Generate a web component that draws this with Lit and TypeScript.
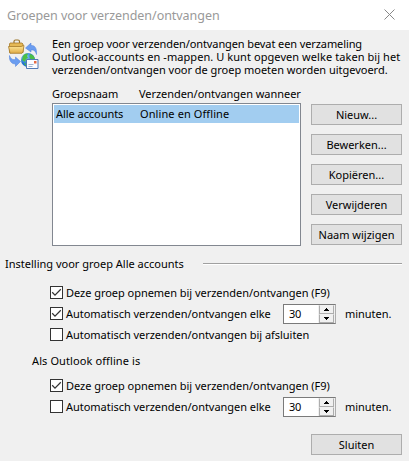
import { LitElement, html, css, svg, nothing } from "lit";
import { customElement, property } from "lit/decorators.js";

@customElement("push-button")
class PushButton extends LitElement {
  @property() label = "";
  static styles = css`
    :host { display: block; width: 91px; height: 21px; letter-spacing: 0; }
    button { width: 100%; height: 100%; box-sizing: border-box; border: 1px solid #adadad; background: #e1e1e1;
      padding: 1px 0 0; margin: 0; font: inherit; letter-spacing: inherit; color: #000; line-height: 18px; display: block; white-space: nowrap; }
  `;
  render() { return html`<button>${this.label}</button>`; }
}

@customElement("check-row")
class CheckRow extends LitElement {
  @property({ type: Boolean }) checked = false;
  @property() label = "";
  static styles = css`
    :host { display: flex; height: 13px; align-items: flex-start; }
    .box { width: 13px; height: 13px; box-sizing: border-box; border: 1px solid #333; background: #fff; margin-right: 3px; flex: none; }
    svg { display: block; }
    .label { line-height: 13px; white-space: nowrap; }
  `;
  render() {
    return html`<span class="box">${this.checked
      ? html`<svg width="11" height="11" viewBox="0 0 11 11">${svg`<path d="M1.2 5.3 4 8.1 9.8 2.3" fill="none" stroke="#333" stroke-width="1.25"/>`}</svg>`
      : nothing}</span><span class="label">${this.label}</span>`;
  }
}

@customElement("number-spinner")
class NumberSpinner extends LitElement {
  @property({ type: Number }) value = 0;
  static styles = css`
    :host { display: flex; box-sizing: border-box; width: 53px; height: 20px; background: #fff;
      border: 1px solid #7a7a7a; border-right-color: #adadad; }
    .value { flex: 1; padding-left: 5px; line-height: 17px; letter-spacing: -0.3px; }
    .arrows { width: 17px; box-sizing: border-box; display: flex; flex-direction: column; background: #f0f0f0; padding: 0 1px; height: 18px; }
    .arrow { box-sizing: border-box; height: 9px; border: 1px solid #adadad; border-top-color: #f0f0f0; background: #f0f0f0; display: flex; align-items: center; justify-content: center; }
    svg { display: block; }
  `;
  render() {
    return html`<span class="value">${this.value}</span>
      <span class="arrows">
        <span class="arrow"><svg width="5" height="3" shape-rendering="crispEdges"><path d="M2 0h1v1h1v1h1v1H0V2h1V1h1z"/></svg></span>
        <span class="arrow"><svg width="5" height="3" shape-rendering="crispEdges"><path d="M0 0h5v1H4v1H3v1H2V2H1V1H0z"/></svg></span>
      </span>`;
  }
}

@customElement("app-root")
class AppRoot extends LitElement {
  static styles = css`
    :host { display: block; width: 409px; height: 461px; background: #f0f0f0; color: #000; overflow: hidden;
      font: 11px/13px "Noto Sans", "Open Sans", sans-serif; letter-spacing: 0; }
    .titlebar { height: 30px; box-sizing: border-box; background: #fff; display: flex; justify-content: space-between; padding: 0 14px 0 7px; }
    .title { font-size: 12.5px; line-height: 32px; color: #999; letter-spacing: -0.04px; white-space: nowrap; }
    .close { margin-top: 9px; }
    .intro { display: flex; padding: 7px 0 0 8px; height: 50px; box-sizing: border-box; }
    .sync { flex: none; margin: 2px 11px 0 0; }
    .intro p { margin: 0; white-space: nowrap; }
    .intro p span { display: block; }
    .l1 { letter-spacing: -0.1px; }
    .l2 { letter-spacing: 0.07px; }
    .l3 { letter-spacing: -0.02px; }
    .headers { display: flex; margin: 7px 0 3px 52px; height: 13px; letter-spacing: -0.05px; }
    .headers span, .item span { white-space: nowrap; }
    .c1 { width: 87px; flex: none; }
    .item .name { width: 84px; letter-spacing: -0.05px; }
    .groups { display: flex; justify-content: space-between; padding: 0 7px 0 52px; }
    .list { width: 249px; height: 143px; box-sizing: border-box; border: 1px solid #828790; background: #fff; padding: 1px; }
    .item { display: flex; height: 18px; line-height: 18px; background: #a2cdf0; padding-left: 2px; letter-spacing: 0.1px; }
    .buttons { display: flex; flex-direction: column; gap: 9px; padding-top: 1px; }
    .section { display: flex; align-items: flex-start; margin: 11px 7px 0 5px; height: 13px; white-space: nowrap; }
    .rule { width: 199px; height: 1px; background: #a0a0a0; border-bottom: 1px solid #fff; margin: 6px 0 0 auto; }
    .options { display: flex; flex-direction: column; gap: 8px; margin-left: 50px; letter-spacing: -0.035px; }
    .online { margin-top: 16px; }
    .offline { margin-top: 12px; }
    .timed { display: flex; height: 13px; align-items: center; }
    .timed check-row { width: 233px; }
    .timed number-spinner { flex: none; margin: 0 9px 0 0; }
    .subhead { margin: 13px 0 0 32px; height: 13px; letter-spacing: 0.1px; }
    .footer { display: flex; justify-content: flex-end; padding: 21px 7px 0 0; }
  `;

  private timed(checked: boolean) {
    return html`<div class="timed">
      <check-row ?checked=${checked} label="Automatisch verzenden/ontvangen elke"></check-row>
      <number-spinner .value=${30}></number-spinner><span>minuten.</span>
    </div>`;
  }

  render() {
    return html`
      <div class="titlebar">
        <span class="title">Groepen voor verzenden/ontvangen</span>
        <svg class="close" width="11" height="11" viewBox="0 0 11 11"><path d="M.5.5l10 10M10.500.5l-10 10" stroke="#888" fill="none"/></svg>
      </div>
      <div class="intro">
        <svg class="sync" width="33" height="32" viewBox="0 0 33 32">
          <defs>
            <linearGradient id="gold" x2="0" y2="1"><stop stop-color="#ffe99b"/><stop offset="1" stop-color="#e0ab45"/></linearGradient>
            <radialGradient id="globe" cx=".35" cy=".3"><stop stop-color="#8fd0ff"/><stop offset="1" stop-color="#1c6fd0"/></radialGradient>
          </defs>
          <path d="M6 4.500V2.500Q6 1 7.500 1h2.500Q11.500 1 11.500 2.500V4.500" fill="none" stroke="#9a7428" stroke-width="1.200"/>
          <path d="M2 4h12l1 1v8.500H1.500V5z" fill="#e6b955" stroke="#a67a2a" stroke-width=".8"/>
          <path d="M.5 7.500h12.500l3-1-1 6.500-1 1.300H2z" fill="url(#gold)" stroke="#a67a2a" stroke-width=".8"/>
          <path d="M17.500 9l5.500-5v2.500c4-.5 6 3 5.500 9-1-3.500-2.500-5-5.500-4.500V13z" fill="#6b9df0" stroke="#4a7ddb" stroke-width=".5"/>
          <path d="M12.500 22.500l-5 5v-2.500C3.500 25 1 22 1.500 16.500 3 20 4.500 21 7.500 20.500V18z" fill="#6b9df0" stroke="#4a7ddb" stroke-width=".5"/>
          <circle cx="20" cy="21" r="7" fill="url(#globe)"/>
          <path d="M15 17c2-2.500 4-2.800 5-2l-1 2 1 2-2 1-1 3-3-2zM22 15c3 .5 5 3 5 6h-4l-1.500-3z" fill="#4cbf45"/>
          <path d="M16 24l3 1v2.500q-2-.5-3-3.500z" fill="#4cbf45"/>
          <path d="M18.500 20.500h11.500v9H18.500z" fill="#fbfcff" stroke="#5279b5"/>
          <path d="M20.500 25.500h5M20.500 27.500h4" stroke="#8aa0c4" stroke-width=".8"/>
          <path d="M26 22h2.500v2.500H26z" fill="#e66a42"/>
        </svg>
        <p><span class="l1">Een groep voor verzenden/ontvangen bevat een verzameling</span><span class="l2">Outlook-accounts en -mappen. U kunt opgeven welke taken bij het</span><span class="l3">verzenden/ontvangen voor de groep moeten worden uitgevoerd.</span></p>
      </div>
      <div class="headers"><span class="c1">Groepsnaam</span><span>Verzenden/ontvangen wanneer</span></div>
      <div class="groups">
        <div class="list"><div class="item"><span class="c1 name">Alle accounts</span><span>Online en Offline</span></div></div>
        <div class="buttons">
          ${["Nieuw...", "Bewerken...", "Kopiëren...", "Verwijderen", "Naam wijzigen"].map((l) => html`<push-button label=${l}></push-button>`)}
        </div>
      </div>
      <div class="section"><span>Instelling voor groep Alle accounts</span><span class="rule"></span></div>
      <div class="options online">
        <check-row checked label="Deze groep opnemen bij verzenden/ontvangen (F9)"></check-row>
        ${this.timed(true)}
        <check-row label="Automatisch verzenden/ontvangen bij afsluiten"></check-row>
      </div>
      <div class="subhead">Als Outlook offline is</div>
      <div class="options offline">
        <check-row checked label="Deze groep opnemen bij verzenden/ontvangen (F9)"></check-row>
        ${this.timed(false)}
      </div>
      <div class="footer"><push-button label="Sluiten"></push-button></div>
    `;
  }
}
